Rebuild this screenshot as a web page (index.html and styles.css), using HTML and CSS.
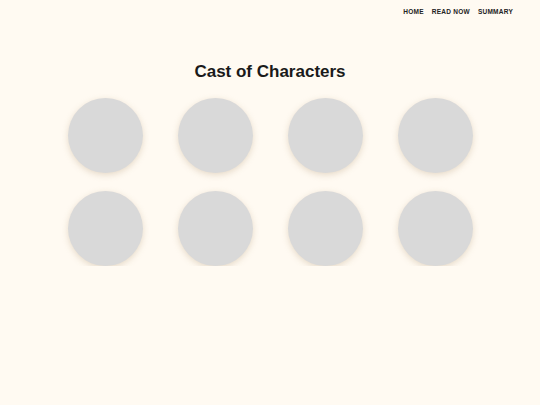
FILE: index.html
```html
<!DOCTYPE html>
<html>
<head>
<meta charset="utf-8">
<link rel="stylesheet" href="styles.css">
</head>
<body>
<header class="top">
  <nav class="nav">
    <a href="#">HOME</a>
    <a href="#">READ NOW</a>
    <a href="#">SUMMARY</a>
  </nav>
</header>
<main class="main">
  <h1 class="title">Cast of Characters</h1>
  <div class="grid">
    <div class="circle"></div>
    <div class="circle"></div>
    <div class="circle"></div>
    <div class="circle"></div>
    <div class="circle"></div>
    <div class="circle"></div>
    <div class="circle"></div>
    <div class="circle"></div>
  </div>
</main>
</body>
</html>
```
FILE: styles.css
```css
html, body {
  margin: 0;
  padding: 0;
  background: #fffaf2;
  font-family: "Liberation Sans", Arial, sans-serif;
  color: #1a1a1a;
}
.top {
  display: flex;
  justify-content: flex-end;
  padding: 8px 27px 0 0;
  height: 16px;
}
.nav {
  display: flex;
  gap: 8px;
}
.nav a {
  font-size: 6.5px;
  font-weight: bold;
  letter-spacing: 0.25px;
  color: #222;
  text-decoration: none;
  line-height: 8px;
}
.main {
  display: flex;
  flex-direction: column;
  align-items: center;
}
.title {
  margin: 37px 0 0 0;
  font-size: 17px;
  font-weight: bold;
  line-height: 22px;
}
.grid {
  margin-top: 15px;
  display: grid;
  grid-template-columns: repeat(4, 75px);
  column-gap: 35px;
  row-gap: 18px;
}
.circle {
  width: 75px;
  height: 75px;
  border-radius: 50%;
  background: #d9d9d9;
  box-shadow: 0 2px 6px rgba(200, 180, 150, 0.45);
}
```
